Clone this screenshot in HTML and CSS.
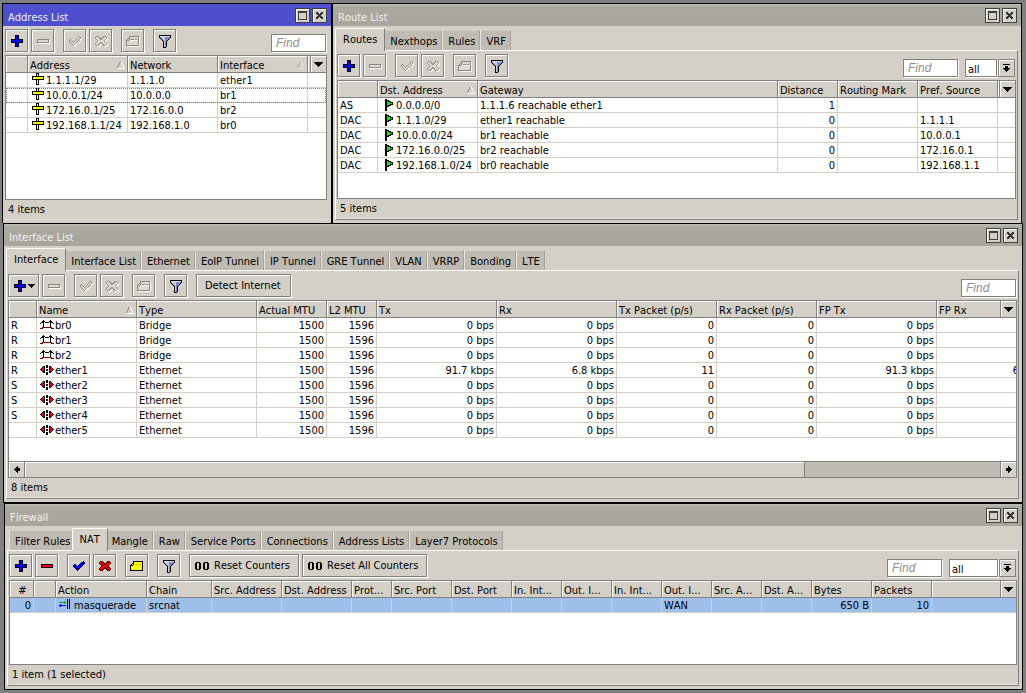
FILE: index.html
```html
<!DOCTYPE html>
<html lang="en">
  <head>
    <meta charset="UTF-8" />
    <meta name="viewport" content="width=device-width, initial-scale=1.0" />
    <title>Router</title>
    <link rel="stylesheet" href="styles.css">
  </head>
  <body>
    <!-- icon sprite -->
    <svg class="sprite" aria-hidden="true">
      <symbol id="i-plus" viewBox="-1 -1 15 15">
        <path d="M5 1h4v4h4v4H9v4H5V9H1V5h4z" fill="#000" />
        <path d="M6 2h2v4h4v2H8v4H6V8H2V6h4z" fill="#00f" />
      </symbol>
      <symbol id="i-minus" viewBox="-1 -1 15 15">
        <path d="M1 5h12v4H1z" fill="#000" />
        <path d="M2 6h10v2H2z" fill="#f00" />
      </symbol>
      <symbol id="i-minus-off" viewBox="-1 -1 15 15">
        <path d="M2 6h12v4H2z" fill="#fff" />
        <path d="M1 5h12v4H1z" fill="#8a8780" />
        <path d="M2 6h10v2H2z" fill="#dedad3" />
      </symbol>
      <symbol id="i-check" viewBox="-1 -1 15 15">
        <path d="M11 2h1v1h1v2h-1v1h-1v1h-1v1H9v1H8v1H7v1H6v1H5v-1H4v-1H3V9H2V8H1V6h1V5h2v1h1v1h1V6h1V5h1V4h1V3h2z" fill="#000080" />
        <path d="M11 3h1v1h-1v1h-1v1H9v1H8v1H7v1H6v1H5V9H4V8H3V7H2V6h2v1h1v1h1V7h1V6h1V5h1V4h2z" fill="#00f" />
      </symbol>
      <symbol id="i-check-off" viewBox="-1 -1 15 15">
        <path d="M12 3h1v1h1v2h-1v1h-1v1h-1v1h-1v1H9v1H8v1H7v1H6v-1H5v-1H4v-1H3V9h9z" fill="#fff" />
        <path d="M1 6h1V5h1v1h1v1h1v1h1V7h1V6h1V5h1V4h1V3h1V2h1v1h1v2h-1v1h-1v1h-1v1H9v1H8v1H7v1H6v1H5v-1H4v-1H3V9H2V8H1z" fill="#918e87" />
        <path d="M2 6h1v1h1v1h1v1h1V8h1V7h1V6h1V5h1V4h1V3h1v2h-1v1h-1v1H9v1H8v1H7v1H6v1H5v-1H4V9H3V8H2z" fill="#dedad3" />
      </symbol>
      <symbol id="i-cross" viewBox="-1 -1 15 15">
        <path d="M2 2h3v1h1v1h2V3h1V2h3v1h1v2h-1v1h-1v2h1v1h1v2h-1v1H9v-1H8v-1H6v1H5v1H2v-1H1V9h1V8h1V6H2V5H1V3h1z" fill="#500" />
        <path d="M2 3h2v1h1v1h1v1h2V5h1V4h1V3h2v2h-1v1h-1v1H9v1h1v1h1v1h1v1h-2v-1H9V9H8V8H6v1H5v1H4v1H2V9h1V8h1V7h1V6H3V5H2z" fill="#f00" />
      </symbol>
      <symbol id="i-cross-off" viewBox="-1 -1 15 15">
        <path d="M3 3h3v1h1v1h2V4h1V3h3v1h1v2h-1v1h-1v2h1v1h1v2h-1v1h-3v-1H9v-1H7v1H6v1H3z" fill="#fff" />
        <path d="M2 2h3v1h1v1h2V3h1V2h3v1h1v2h-1v1h-1v2h1v1h1v2h-1v1H9v-1H8v-1H6v1H5v1H2v-1H1V9h1V8h1V6H2V5H1V3h1z" fill="#9a978f" />
        <path d="M2 3h2v1h1v1h1v1h2V5h1V4h1V3h2v2h-1v1h-1v2h1v1h1v2h-2v-1H9V9H8V8H6v1H5v1H4v1H2V9h1V8h1V6H3V5H2z" fill="#dedad3" />
      </symbol>
      <symbol id="i-note" viewBox="-1 -1 15 15">
        <path d="M3 2h10v10H0V6h1V5h1V4h1z" fill="#000" />
        <path d="M4 3h8v8H1V7h2V6h1z" fill="#ff0" />
        <path d="M3 5v1H2V5z" fill="#ff0" />
        <path d="M6 5h2v1H6zM9 5h2v1H9z" fill="#cfae00" />
      </symbol>
      <symbol id="i-note-off" viewBox="-1 -1 15 15">
        <path d="M4 3h10v10H1z" fill="#fff" />
        <path d="M3 2h10v10H0V6h1V5h1V4h1z" fill="#8a8780" />
        <path d="M4 3h8v8H1V7h2V6h1z" fill="#dedad3" />
        <path d="M3 5v1H2V5z" fill="#dedad3" />
        <path d="M5 5h3v1H5zM9 5h2v1H9z" fill="#8a8780" />
        <path d="M5 6h3v1H5zM9 6h2v1H9z" fill="#fff" />
      </symbol>
      <symbol id="i-filter" viewBox="-1 -1 15 15">
        <path d="M1 1h12v3h-1v1h-1v1h-1v1H9v6H8v1H5V7H4V6H3V5H2V4H1z" fill="#000" />
        <path d="M2 2h10v1H2z" fill="#d6dcf0" />
        <path d="M2 3h10v1h-1v1h-1v1H9v1H8v6H6V7H5V6H4V5H3V4H2z" fill="#7d8cc0" />
        <path d="M3 3h4v10H6V6H5V5H4V4H3z" fill="#c3cdea" />
      </symbol>
      <symbol id="i-down" viewBox="0 0 9 5">
        <path d="M0 0h9v1H8v1H7v1H6v1H5v1H4V4H3V3H2V2H1V1H0z" fill="#000" />
      </symbol>
      <symbol id="i-caret" viewBox="0 0 7 4">
        <path d="M0 0h7v1H6v1H5v1H4v1H3V3H2V2H1V1H0z" fill="#000" />
      </symbol>
      <symbol id="i-pick" viewBox="0 0 7 8">
        <path d="M0 0h7v1H0zM2 2h3v2h2v1H6v1H5v1H4v1H3V7H2V6H1V5H0V4h2z" fill="#000" />
      </symbol>
      <symbol id="i-sort" viewBox="0 0 8 8">
        <path d="M0 7.5L3.5 0.5" stroke="#8a8780" fill="none" />
        <path d="M4 0.5L7.5 7.5H0" stroke="#fff" fill="none" />
      </symbol>
      <symbol id="i-max" viewBox="0 0 9 9">
        <path d="M0 0h9v9H0zM1 2v6h7V2z" fill="#404040" fill-rule="evenodd" />
      </symbol>
      <symbol id="i-close" viewBox="0 0 9 9">
        <path d="M1 1h2v1h1v1h1V2h1V1h2v2H7v1H6v1h1v1h1v2H6V7H5V6H4v1H3v1H1V6h1V5h1V4H2V3H1z" fill="#333" />
      </symbol>
      <symbol id="i-arrow" viewBox="0 0 6 7">
        <path d="M0 2h2V0h1v1h1v1h1v1h1v1H5v1H4v1H3v1H2V5H0z" fill="#000" />
      </symbol>
      <symbol id="i-addr" viewBox="0 0 14 12">
        <path d="M5 0h3v3h5v4H8v5H5V7H1V3h4z" fill="#000" />
        <path d="M6 1h1v2H6zM6 7h1v4H6z" fill="#fff" />
        <path d="M2 4h10v2H2z" fill="#ff0" />
      </symbol>
      <symbol id="i-flag" viewBox="0 0 10 12">
        <path d="M0 0h2v1h2v1h2v1h2v3H6v1H4v1H2v4H0z" fill="#000" />
        <path d="M2 2h1v1h2v1h2v1H5v1H3v1H2z" fill="#0e0" />
      </symbol>
      <symbol id="i-bridge" viewBox="0 0 14 9">
        <path d="M3 0h1v1h1v1h4V1h1V0h1v1h1v1h1v1h1v1h-1V3h-2v4h-1V2H9v1H5V2H4v5H3V3H1v1H0V3h1V2h1V1h1z" fill="#000" />
        <path d="M2 7h10v1h2v1h-3V8H3v1H0V8h2z" fill="#800000" />
      </symbol>
      <symbol id="i-ether" viewBox="0 0 14 10">
        <path d="M6 0h2v3H6zM6 4h2v2H6zM6 7h2v3H6z" fill="#000" />
        <path d="M0 4h1V3h1V2h1V1h2v7H3V7H2V6H1V5H0zM14 4h-1V3h-1V2h-1V1H9v7h2V7h1V6h1V5h1z" fill="#000" />
        <path d="M1 4h1V3h1V2h1v5H3V6H2V5H1zM13 4h-1V3h-1V2h-1v5h1V6h1V5h1z" fill="#e00020" />
      </symbol>
      <symbol id="i-masq" viewBox="0 0 12 12">
        <path d="M0 3h5V2h1v1h1v1H6v1H5V4H0z" fill="#00a84c" />
        <path d="M7 6H2V5H1v1H0v1h1v1h1V7h5z" fill="#00f" />
        <path d="M8 0h1v10H8zM10 0h1v10h-1z" fill="#000" />
      </symbol>
      <symbol id="i-counter" viewBox="0 0 14 9">
        <path d="M1 1h4v1h1v6H5v1H1V8H0V2h1zM2 2v6h2V2zM9 1h4v1h1v6h-1v1H9V8H8V2h1zM10 2v6h2V2z" fill="#000" fill-rule="evenodd" />
      </symbol>
    </svg>

    <main class="desktop">
      <div class="top-row">
        <!-- Address List -->
        <section class="window win-address active">
          <header class="titlebar">
            <h2>Address List</h2>
            <button class="win-btn" aria-label="Maximize"><svg><use href="#i-max" /></svg></button>
            <button class="win-btn" aria-label="Close"><svg><use href="#i-close" /></svg></button>
          </header>
          <div class="content plain">
            <div class="toolbar">
              <button class="btn" aria-label="Add"><svg><use href="#i-plus" /></svg></button>
              <button class="btn" aria-label="Remove"><svg><use href="#i-minus-off" /></svg></button>
              <button class="btn group" aria-label="Enable"><svg><use href="#i-check-off" /></svg></button>
              <button class="btn" aria-label="Disable"><svg><use href="#i-cross-off" /></svg></button>
              <button class="btn group" aria-label="Comment"><svg><use href="#i-note-off" /></svg></button>
              <button class="btn group" aria-label="Filter"><svg><use href="#i-filter" /></svg></button>
              <input class="find" type="text" placeholder="Find" aria-label="Find address" />
            </div>
            <div class="list list-address">
              <button class="col-menu" aria-label="Columns"><svg><use href="#i-down" /></svg></button>
              <table>
                <colgroup><col class="w22"><col class="w100"><col class="w90"><col class="w90"><col></colgroup>
                <thead>
                  <tr><th></th><th>Address<svg class="sort"><use href="#i-sort" /></svg></th><th>Network</th><th>Interface<svg class="sort faint"><use href="#i-sort" /></svg></th><th></th></tr>
                </thead>
                <tbody>
                  <tr><td></td><td><svg class="ico addr"><use href="#i-addr" /></svg>1.1.1.1/29</td><td>1.1.1.0</td><td>ether1</td><td></td></tr>
                  <tr class="focused"><td></td><td><svg class="ico addr"><use href="#i-addr" /></svg>10.0.0.1/24</td><td>10.0.0.0</td><td>br1</td><td></td></tr>
                  <tr><td></td><td><svg class="ico addr"><use href="#i-addr" /></svg>172.16.0.1/25</td><td>172.16.0.0</td><td>br2</td><td></td></tr>
                  <tr><td></td><td><svg class="ico addr"><use href="#i-addr" /></svg>192.168.1.1/24</td><td>192.168.1.0</td><td>br0</td><td></td></tr>
                </tbody>
              </table>
            </div>
            <footer class="status">4 items</footer>
          </div>
        </section>

        <!-- Route List -->
        <section class="window win-route">
          <header class="titlebar">
            <h2>Route List</h2>
            <button class="win-btn" aria-label="Maximize"><svg><use href="#i-max" /></svg></button>
            <button class="win-btn" aria-label="Close"><svg><use href="#i-close" /></svg></button>
          </header>
          <nav class="tabs">
            <button class="tab current">Routes</button>
            <button class="tab">Nexthops</button>
            <button class="tab">Rules</button>
            <button class="tab">VRF</button>
          </nav>
          <div class="content panel">
            <div class="toolbar">
              <button class="btn" aria-label="Add"><svg><use href="#i-plus" /></svg></button>
              <button class="btn" aria-label="Remove"><svg><use href="#i-minus-off" /></svg></button>
              <button class="btn group" aria-label="Enable"><svg><use href="#i-check-off" /></svg></button>
              <button class="btn" aria-label="Disable"><svg><use href="#i-cross-off" /></svg></button>
              <button class="btn group" aria-label="Comment"><svg><use href="#i-note-off" /></svg></button>
              <button class="btn group" aria-label="Filter"><svg><use href="#i-filter" /></svg></button>
              <input class="find" type="text" placeholder="Find" aria-label="Find route" />
              <input class="scope" type="text" value="all" aria-label="Route table" />
              <button class="pick" aria-label="Choose table"><svg><use href="#i-pick" /></svg></button>
            </div>
            <div class="list list-route">
              <button class="col-menu" aria-label="Columns"><svg><use href="#i-down" /></svg></button>
              <table>
                <colgroup><col class="w40"><col class="w100"><col class="w300"><col class="w60"><col class="w80"><col class="w80"><col></colgroup>
                <thead>
                  <tr><th></th><th>Dst. Address<svg class="sort"><use href="#i-sort" /></svg></th><th>Gateway</th><th>Distance</th><th>Routing Mark</th><th>Pref. Source</th><th></th></tr>
                </thead>
                <tbody>
                  <tr><td>AS</td><td><svg class="ico flag"><use href="#i-flag" /></svg>0.0.0.0/0</td><td>1.1.1.6 reachable ether1</td><td class="num">1</td><td></td><td></td><td></td></tr>
                  <tr><td>DAC</td><td><svg class="ico flag"><use href="#i-flag" /></svg>1.1.1.0/29</td><td>ether1 reachable</td><td class="num">0</td><td></td><td>1.1.1.1</td><td></td></tr>
                  <tr><td>DAC</td><td><svg class="ico flag"><use href="#i-flag" /></svg>10.0.0.0/24</td><td>br1 reachable</td><td class="num">0</td><td></td><td>10.0.0.1</td><td></td></tr>
                  <tr><td>DAC</td><td><svg class="ico flag"><use href="#i-flag" /></svg>172.16.0.0/25</td><td>br2 reachable</td><td class="num">0</td><td></td><td>172.16.0.1</td><td></td></tr>
                  <tr><td>DAC</td><td><svg class="ico flag"><use href="#i-flag" /></svg>192.168.1.0/24</td><td>br0 reachable</td><td class="num">0</td><td></td><td>192.168.1.1</td><td></td></tr>
                </tbody>
              </table>
            </div>
            <footer class="status">5 items</footer>
          </div>
        </section>
      </div>

      <!-- Interface List -->
      <section class="window win-interface">
        <header class="titlebar">
          <h2>Interface List</h2>
          <button class="win-btn" aria-label="Maximize"><svg><use href="#i-max" /></svg></button>
          <button class="win-btn" aria-label="Close"><svg><use href="#i-close" /></svg></button>
        </header>
        <nav class="tabs">
          <button class="tab current">Interface</button>
          <button class="tab">Interface List</button>
          <button class="tab">Ethernet</button>
          <button class="tab">EoIP Tunnel</button>
          <button class="tab">IP Tunnel</button>
          <button class="tab">GRE Tunnel</button>
          <button class="tab">VLAN</button>
          <button class="tab">VRRP</button>
          <button class="tab">Bonding</button>
          <button class="tab">LTE</button>
        </nav>
        <div class="content panel">
          <div class="toolbar">
            <button class="btn btn-menu" aria-label="Add"><svg><use href="#i-plus" /></svg><svg class="caret"><use href="#i-caret" /></svg></button>
            <button class="btn" aria-label="Remove"><svg><use href="#i-minus-off" /></svg></button>
            <button class="btn group" aria-label="Enable"><svg><use href="#i-check-off" /></svg></button>
            <button class="btn" aria-label="Disable"><svg><use href="#i-cross-off" /></svg></button>
            <button class="btn group" aria-label="Comment"><svg><use href="#i-note-off" /></svg></button>
            <button class="btn group" aria-label="Filter"><svg><use href="#i-filter" /></svg></button>
            <button class="btn text group">Detect Internet</button>
            <input class="find" type="text" placeholder="Find" aria-label="Find interface" />
          </div>
          <div class="list list-interface">
            <button class="col-menu" aria-label="Columns"><svg><use href="#i-down" /></svg></button>
            <table class="wide">
              <colgroup><col class="w28"><col class="w100"><col class="w120"><col class="w70"><col class="w50"><col class="w120"><col class="w120"><col class="w100"><col class="w100"><col class="w120"><col class="w120"></colgroup>
              <thead>
                <tr><th></th><th>Name<svg class="sort"><use href="#i-sort" /></svg></th><th>Type</th><th>Actual MTU</th><th>L2 MTU</th><th>Tx</th><th>Rx</th><th>Tx Packet (p/s)</th><th>Rx Packet (p/s)</th><th>FP Tx</th><th>FP Rx</th></tr>
              </thead>
              <tbody>
                <tr><td>R</td><td><svg class="ico bridge"><use href="#i-bridge" /></svg>br0</td><td>Bridge</td><td class="num">1500</td><td class="num">1596</td><td class="num">0 bps</td><td class="num">0 bps</td><td class="num">0</td><td class="num">0</td><td class="num">0 bps</td><td class="num">0 bps</td></tr>
                <tr><td>R</td><td><svg class="ico bridge"><use href="#i-bridge" /></svg>br1</td><td>Bridge</td><td class="num">1500</td><td class="num">1596</td><td class="num">0 bps</td><td class="num">0 bps</td><td class="num">0</td><td class="num">0</td><td class="num">0 bps</td><td class="num">0 bps</td></tr>
                <tr><td>R</td><td><svg class="ico bridge"><use href="#i-bridge" /></svg>br2</td><td>Bridge</td><td class="num">1500</td><td class="num">1596</td><td class="num">0 bps</td><td class="num">0 bps</td><td class="num">0</td><td class="num">0</td><td class="num">0 bps</td><td class="num">0 bps</td></tr>
                <tr><td>R</td><td><svg class="ico ether"><use href="#i-ether" /></svg>ether1</td><td>Ethernet</td><td class="num">1500</td><td class="num">1596</td><td class="num">91.7 kbps</td><td class="num">6.8 kbps</td><td class="num">11</td><td class="num">0</td><td class="num">91.3 kbps</td><td class="num">6.4 kbps</td></tr>
                <tr><td>S</td><td><svg class="ico ether"><use href="#i-ether" /></svg>ether2</td><td>Ethernet</td><td class="num">1500</td><td class="num">1596</td><td class="num">0 bps</td><td class="num">0 bps</td><td class="num">0</td><td class="num">0</td><td class="num">0 bps</td><td class="num">0 bps</td></tr>
                <tr><td>S</td><td><svg class="ico ether"><use href="#i-ether" /></svg>ether3</td><td>Ethernet</td><td class="num">1500</td><td class="num">1596</td><td class="num">0 bps</td><td class="num">0 bps</td><td class="num">0</td><td class="num">0</td><td class="num">0 bps</td><td class="num">0 bps</td></tr>
                <tr><td>S</td><td><svg class="ico ether"><use href="#i-ether" /></svg>ether4</td><td>Ethernet</td><td class="num">1500</td><td class="num">1596</td><td class="num">0 bps</td><td class="num">0 bps</td><td class="num">0</td><td class="num">0</td><td class="num">0 bps</td><td class="num">0 bps</td></tr>
                <tr><td></td><td><svg class="ico ether"><use href="#i-ether" /></svg>ether5</td><td>Ethernet</td><td class="num">1500</td><td class="num">1596</td><td class="num">0 bps</td><td class="num">0 bps</td><td class="num">0</td><td class="num">0</td><td class="num">0 bps</td><td class="num">0 bps</td></tr>
              </tbody>
            </table>
          </div>
          <div class="scrollbar">
            <button class="scroll-btn left" aria-label="Scroll left"><svg><use href="#i-arrow" /></svg></button>
            <div class="track"><div class="thumb"></div></div>
            <button class="scroll-btn" aria-label="Scroll right"><svg><use href="#i-arrow" /></svg></button>
          </div>
          <footer class="status">8 items</footer>
        </div>
      </section>

      <!-- Firewall -->
      <section class="window win-firewall">
        <header class="titlebar">
          <h2>Firewall</h2>
          <button class="win-btn" aria-label="Maximize"><svg><use href="#i-max" /></svg></button>
          <button class="win-btn" aria-label="Close"><svg><use href="#i-close" /></svg></button>
        </header>
        <nav class="tabs inset">
          <button class="tab">Filter Rules</button>
          <button class="tab current">NAT</button>
          <button class="tab">Mangle</button>
          <button class="tab">Raw</button>
          <button class="tab">Service Ports</button>
          <button class="tab">Connections</button>
          <button class="tab">Address Lists</button>
          <button class="tab">Layer7 Protocols</button>
        </nav>
        <div class="content panel">
          <div class="toolbar">
            <button class="btn" aria-label="Add"><svg><use href="#i-plus" /></svg></button>
            <button class="btn" aria-label="Remove"><svg><use href="#i-minus" /></svg></button>
            <button class="btn group" aria-label="Enable"><svg><use href="#i-check" /></svg></button>
            <button class="btn" aria-label="Disable"><svg><use href="#i-cross" /></svg></button>
            <button class="btn group" aria-label="Comment"><svg><use href="#i-note" /></svg></button>
            <button class="btn group" aria-label="Filter"><svg><use href="#i-filter" /></svg></button>
            <button class="btn text counter group"><svg><use href="#i-counter" /></svg>Reset Counters</button>
            <button class="btn text counter"><svg><use href="#i-counter" /></svg>Reset All Counters</button>
            <input class="find" type="text" placeholder="Find" aria-label="Find rule" />
            <input class="scope long" type="text" value="all" aria-label="Chain filter" />
            <button class="pick" aria-label="Choose chain"><svg><use href="#i-pick" /></svg></button>
          </div>
          <div class="list list-firewall">
            <button class="col-menu" aria-label="Columns"><svg><use href="#i-down" /></svg></button>
            <table>
              <colgroup><col class="w24"><col class="w22"><col class="w91"><col class="w65"><col class="w70"><col class="w70"><col class="w40"><col class="w60"><col class="w60"><col class="w50"><col class="w50"><col class="w50"><col class="w50"><col class="w50"><col class="w50"><col class="w60"><col class="w60"><col></colgroup>
              <thead>
                <tr><th class="mid">#</th><th></th><th>Action</th><th>Chain</th><th>Src. Address</th><th>Dst. Address</th><th>Prot...</th><th>Src. Port</th><th>Dst. Port</th><th>In. Int...</th><th>Out. I...</th><th>In. Int...</th><th>Out. I...</th><th>Src. A...</th><th>Dst. A...</th><th>Bytes</th><th>Packets</th><th></th></tr>
              </thead>
              <tbody>
                <tr class="selected"><td class="num">0</td><td></td><td><svg class="ico masq"><use href="#i-masq" /></svg>masquerade</td><td>srcnat</td><td></td><td></td><td></td><td></td><td></td><td></td><td></td><td></td><td>WAN</td><td></td><td></td><td class="num">650 B</td><td class="num">10</td><td></td></tr>
              </tbody>
            </table>
          </div>
          <footer class="status">1 item (1 selected)</footer>
        </div>
      </section>
    </main>
  </body>
</html>
```
FILE: styles.css
```css
* {
  box-sizing: border-box;
}

body {
  margin: 0;
  background: #808080;
  color: #000;
  font-family: "DejaVu Sans Condensed", "DejaVu Sans", sans-serif;
  font-stretch: condensed;
  font-kerning: none;
  font-size: 11px;
  line-height: 14px;
}

button,
input {
  font: inherit;
  font-kerning: none;
  color: inherit;
  margin: 0;
  padding: 0;
  border-radius: 0;
}

svg {
  display: block;
  flex: none;
  shape-rendering: crispEdges;
}

.sprite {
  position: absolute;
  width: 0;
  height: 0;
}

.desktop {
  padding: 3px;
}

.top-row {
  display: flex;
  margin: 0 1px 0 -1px;
}

/* windows */

.window {
  display: flex;
  flex-direction: column;
  background: #d4d0c8;
  border: 1px solid #000;
  padding-bottom: 3px;
  min-width: 0;
}

.top-row .window {
  border-bottom: 0;
}

.win-address {
  flex: 0 0 330px;
}

.win-route {
  flex: 1;
}

.win-firewall {
  margin-left: 1px;
}

.titlebar {
  display: flex;
  align-items: center;
  gap: 2px;
  height: 22px;
  padding: 0 4px 0 5px;
  background: linear-gradient(#c0bdb5, #aca9a1 3px, #a8a59d);
  color: #f0f0f0;
}

.active .titlebar {
  background: #4e4fce;
}

.titlebar h2 {
  flex: 1;
  margin: 0;
  padding-top: 6px;
  font-size: 11px;
  font-weight: normal;
}

.win-btn {
  display: flex;
  align-items: center;
  justify-content: center;
  width: 15px;
  height: 15px;
  background: #d4d0c8;
  border: 1px solid #404040;
  box-shadow: inset 1px 1px #fff;
}

.win-btn svg {
  width: 9px;
  height: 9px;
}

/* tabs */

.tabs {
  display: flex;
  align-items: flex-end;
  height: 24px;
  padding-left: 2px;
}

.tabs.inset {
  padding-left: 4px;
}

.tab {
  height: 20px;
  padding: 2px 4px 0 5px;
  background: #bfbab2;
  border: solid;
  border-width: 1px 1px 0;
  border-color: #d4d0c8 #a8a49c #a8a49c #e6e3dd;
}

/* the open tab overlaps its neighbours and the panel edge */
.tab.current {
  position: relative;
  z-index: 1;
  height: 23px;
  margin: 0 -2px -1px -4px;
  padding: 0 7px 1px;
  background: #d4d0c8;
  border-color: #fff #808080 #fff #fff;
}

.tab.current:first-child {
  margin: 0 -1px -1px 0;
}

.content {
  display: flex;
  flex-direction: column;
  flex: 1;
  margin: 0 4px 0 2px;
}

.panel {
  margin-right: 3px;
  padding: 0 1px;
  border: 1px solid;
  border-color: #fff #808080 #808080 #fff;
}

/* toolbar */

.toolbar {
  display: flex;
  align-items: center;
  gap: 3px;
  padding: 3px 1px 3px 0;
}

.btn {
  display: flex;
  align-items: center;
  justify-content: center;
  width: 23px;
  height: 23px;
  background: #d4d0c8;
  border: 1px solid #808080;
  box-shadow: inset 1px 1px #fff, 1px 1px #fff;
}

.btn svg {
  width: 15px;
  height: 15px;
}

.btn.group {
  margin-left: 6px;
}

.btn-menu {
  gap: 1px;
  width: 31px;
}

.btn-menu .caret {
  width: 7px;
  height: 4px;
}

.btn.text {
  width: auto;
  padding: 0 9px 0 8px;
}

.btn.counter {
  gap: 5px;
  padding: 0 8px 0 5px;
}

.btn.counter svg {
  width: 14px;
  height: 9px;
}

.find,
.scope {
  height: 18px;
  background: #fff;
  border: 1px solid #808080;
  box-shadow: 1px 1px #fff;
}

.find {
  width: 55px;
  margin: 5px 0 0 auto;
  padding-left: 4px;
}

.find::placeholder {
  color: #909090;
  font-family: "Liberation Sans", sans-serif;
  font-size: 12px;
  font-style: italic;
}

.scope {
  width: 32px;
  margin: 5px 0 0 4px;
  padding: 2px 0 0 2px;
}

.scope.long {
  width: 49px;
}

.pick {
  display: flex;
  align-items: center;
  justify-content: center;
  width: 17px;
  height: 18px;
  margin: 5px 0 0 -2px;
  background: #d4d0c8;
  border: 1px solid #808080;
  box-shadow: inset 1px 1px #fff;
}

.pick svg {
  width: 7px;
  height: 8px;
}

/* lists */

.list {
  position: relative;
  flex: 1;
  overflow: hidden;
  background: #fff;
  border: 1px solid #808080;
}

.list-route {
  min-height: 119px;
}

.list-interface {
  min-height: 162px;
}

.list-firewall {
  min-height: 85px;
}

table {
  width: 100%;
  table-layout: fixed;
  border-collapse: separate;
  border-spacing: 0;
}

table.wide {
  width: 1048px;
}

th {
  position: relative;
  height: 17px;
  padding: 4px 0 0 2px;
  overflow: hidden;
  background: #d4d0c8;
  border-right: 1px solid #808080;
  border-bottom: 1px solid #808080;
  box-shadow: inset 1px 1px #fff;
  font-weight: normal;
  line-height: 12px;
  text-align: left;
  white-space: nowrap;
}

th.mid {
  text-align: center;
}

.sort {
  position: absolute;
  top: 5px;
  right: 2px;
  width: 8px;
  height: 8px;
  shape-rendering: auto;
}

.sort.faint {
  opacity: 0.5;
}

td {
  height: 15px;
  padding: 2px 2px 0;
  overflow: hidden;
  border-right: 1px solid #d4d0c8;
  border-bottom: 1px solid #d4d0c8;
  line-height: 12px;
  white-space: nowrap;
}

th:last-child,
td:last-child {
  border-right: 0;
}

.num {
  text-align: right;
}

.focused {
  outline: 1px dotted #808080;
  outline-offset: -1px;
}

.selected td {
  background: #9dbfea;
}

.col-menu {
  position: absolute;
  z-index: 1;
  top: 0;
  right: 0;
  display: flex;
  align-items: center;
  justify-content: center;
  width: 16px;
  height: 17px;
  background: #d4d0c8;
  border: solid #808080;
  border-width: 0 0 1px 1px;
  box-shadow: inset 1px 1px #fff;
}

.col-menu svg {
  width: 9px;
  height: 5px;
}

.ico {
  display: inline-block;
  vertical-align: top;
}

.addr {
  width: 14px;
  height: 12px;
  margin: -2px 1px 0;
}

.flag {
  width: 10px;
  height: 12px;
  margin: -1px 1px 0 5px;
}

.bridge,
.ether {
  width: 14px;
  height: 9px;
  margin: 0 1px;
}

.ether {
  height: 10px;
}

.masq {
  width: 12px;
  height: 12px;
  margin: -1px 3px 0 1px;
}

.w22 { width: 22px; }
.w24 { width: 24px; }
.w28 { width: 28px; }
.w40 { width: 40px; }
.w50 { width: 50px; }
.w60 { width: 60px; }
.w65 { width: 65px; }
.w70 { width: 70px; }
.w80 { width: 80px; }
.w90 { width: 90px; }
.w91 { width: 91px; }
.w100 { width: 100px; }
.w120 { width: 120px; }
.w300 { width: 300px; }

/* scrollbar */

.scrollbar {
  display: flex;
  height: 16px;
  background: #bfbab2;
  border: solid #808080;
  border-width: 0 1px 1px;
}

.scroll-btn {
  display: flex;
  align-items: center;
  justify-content: center;
  width: 16px;
  background: #d4d0c8;
  border: solid #808080;
  border-width: 0 0 0 1px;
  box-shadow: inset 1px 1px #fff;
}

.scroll-btn.left {
  border-width: 0 1px 0 0;
}

.scroll-btn svg {
  width: 6px;
  height: 7px;
}

.scroll-btn.left svg {
  transform: scaleX(-1);
}

.track {
  flex: 1;
}

.thumb {
  width: 80%;
  height: 100%;
  background: #d4d0c8;
  border-right: 1px solid #808080;
  box-shadow: inset 1px 1px #fff;
}

.status {
  height: 20px;
  padding: 3px 3px 0;
  border-bottom: 1px solid #e6e3dd;
}
```
